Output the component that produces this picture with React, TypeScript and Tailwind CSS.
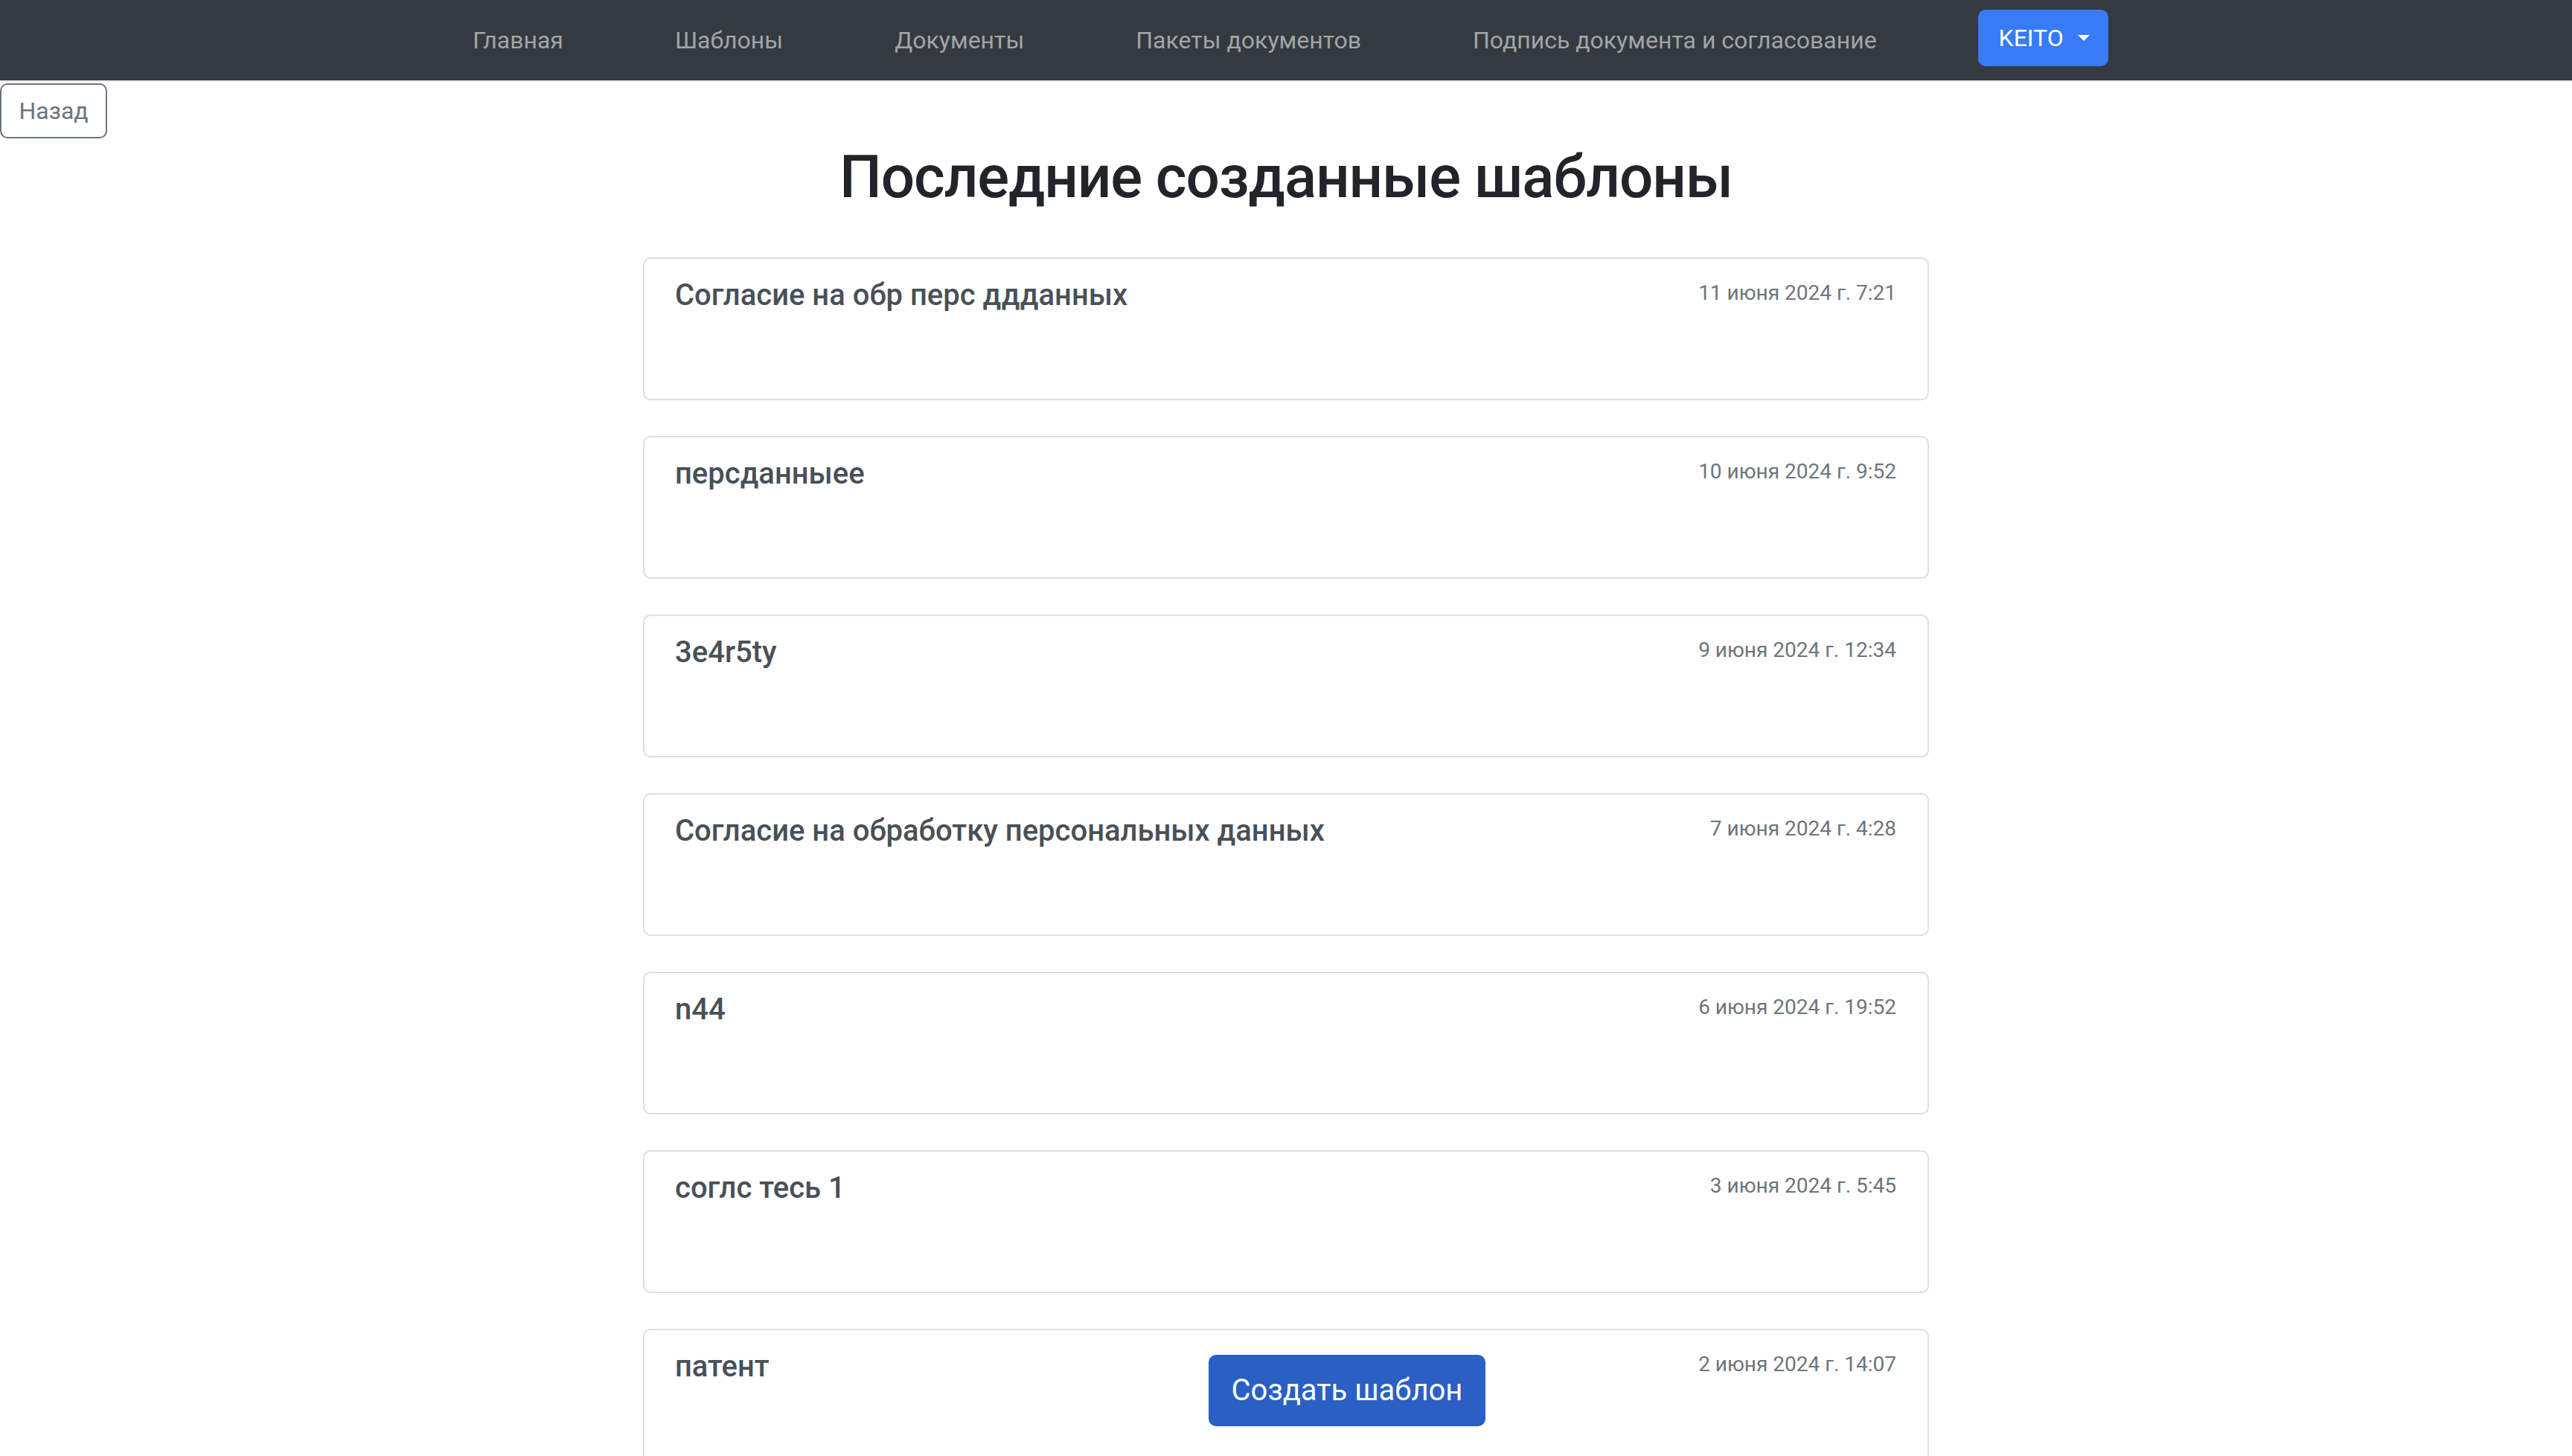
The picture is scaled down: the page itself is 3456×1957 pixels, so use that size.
import React from "react";

const templates = [
  { title: "Согласие на обр перс ддданных", date: "11 июня 2024 г. 7:21" },
  { title: "персданныее", date: "10 июня 2024 г. 9:52" },
  { title: "3e4r5ty", date: "9 июня 2024 г. 12:34" },
  { title: "Согласие на обработку персональных данных", date: "7 июня 2024 г. 4:28" },
  { title: "n44", date: "6 июня 2024 г. 19:52" },
  { title: "соглс тесь 1", date: "3 июня 2024 г. 5:45" },
  { title: "патент", date: "2 июня 2024 г. 14:07" },
];

const navLinks = ["Главная", "Шаблоны", "Документы", "Пакеты документов", "Подпись документа и согласование"];

export default function App() {
  return (
    <div
      className="relative w-full h-[1957px] overflow-hidden bg-white"
      style={{ fontFamily: "Roboto, 'Noto Sans', 'Liberation Sans', sans-serif" }}
    >
      <nav className="h-[110px] bg-[#343a40] border-b-2 border-[#e4e6e8] flex items-center justify-center pl-[12px]">
        <div className="flex items-center gap-[150px]">
          {navLinks.map((l) => (
            <a key={l} className="text-[32px] leading-[48px] text-[#a2a5a8] whitespace-nowrap">
              {l}
            </a>
          ))}
        </div>
        <button className="ml-[136px] h-[76px] mt-[-6px] rounded-[10px] bg-[#377bf6] text-white text-[32px] leading-[48px] pl-[28px] pr-[25px] flex items-center gap-[19px]">
          <span>KEITO</span>
          <span className="w-0 h-0 border-l-[8px] border-r-[8px] border-t-[8px] border-l-transparent border-r-transparent border-t-white"></span>
        </button>
      </nav>

      <div className="mt-[2px]">
        <button className="h-[74px] w-[144px] rounded-[10px] border-2 border-[#6c757d] text-[#6c757d] text-[32px] leading-[48px] flex items-center justify-center">
          Назад
        </button>
      </div>

      <h1 className="mt-[4px] text-center text-[80px] leading-[96px] font-medium tracking-[-1.1px] text-[#212529]">
        Последние созданные шаблоны
      </h1>

      <div className="mt-[60px] w-[1728px] mx-auto flex flex-col gap-[48px]">
        {templates.map((t) => (
          <div
            key={t.date}
            className="h-[192px] shrink-0 rounded-[10px] border-2 border-[#dfdfdf] bg-white pt-[25px] pl-[41px] pr-[42px] flex justify-between items-start"
          >
            <div className="text-[40px] leading-[48px] font-medium text-[#495057]">{t.title}</div>
            <div className="mt-[3px] text-[28px] leading-[36px] text-[#6c757d] whitespace-nowrap">{t.date}</div>
          </div>
        ))}
      </div>

      <button className="absolute left-[1624px] bottom-[40px] w-[372px] h-[96px] rounded-[10px] bg-[#2a60c4] text-white text-[40px] leading-[60px] flex items-center justify-center">
        Создать шаблон
      </button>
    </div>
  );
}
